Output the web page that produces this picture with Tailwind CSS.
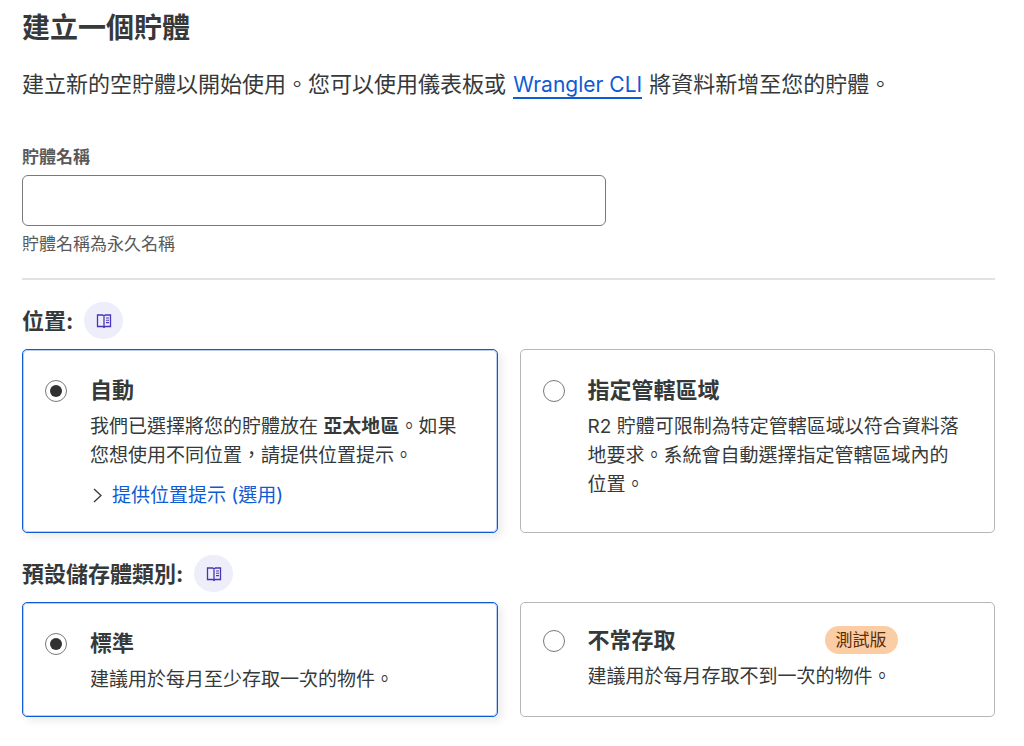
<!DOCTYPE html>
<html lang="zh-Hant-TW">
<head>
    <meta charset="UTF-8">
    <meta name="viewport" content="width=device-width, initial-scale=1.0">
    <title>建立一個貯體</title>
    <script src="https://cdn.jsdelivr.net/npm/@tailwindcss/browser@4"></script>
</head>
<body class="bg-white text-[#36393a] font-['Inter','Noto_Sans_CJK_TC',sans-serif]">
    <main class="pt-[10px] pb-7 pl-[22px] pr-[29px]">
        <h1 class="text-[28px] leading-9 font-bold">建立一個貯體</h1>
        <p class="mt-[22px] text-[22px] leading-[33px]">建立新的空貯體以開始使用。您可以使用儀表板或 <a href="#" class="mx-px text-[21px] text-[#0f5bd3] border-b-2 border-[#0f5bd3]">Wrangler CLI</a> 將資料新增至您的貯體。</p>

        <form>
            <!-- Bucket name -->
            <div class="mt-11 text-[#595959]">
                <label for="bucket-name" class="block text-[17px] leading-6 font-semibold">貯體名稱</label>
                <input id="bucket-name" type="text" aria-describedby="bucket-help" class="block mt-[6px] w-3/5 h-[51px] px-4 text-[19px] rounded-md border border-[#797979] bg-white">
                <p id="bucket-help" class="mt-[6px] text-[17px] leading-6">貯體名稱為永久名稱</p>
            </div>

            <hr class="mt-[22px] border-t-2 border-[#e2e2e2]">

            <!-- Location -->
            <section class="mt-[22px]">
                <div class="flex items-center gap-[11px]">
                    <h2 class="text-[22px] leading-9 font-bold">位置:</h2>
                    <a href="#" aria-label="位置文件" class="flex items-center justify-center w-[39px] h-[37px] rounded-full bg-[#eeeefb] text-[#4a33b8]">
                        <svg class="w-4 h-4" viewBox="0 0 16 16" fill="none" stroke="currentColor" stroke-width="1.3">
                            <path d="M1.5 2h5.2L8 3l1.3-1h5.2v11.5H9.3L8 14.5l-1.3-1H1.5zM8 3v11.5"/>
                            <path d="M10 5h3M10 7.3h3M10 9.6h3" stroke-width="1.1"/>
                        </svg>
                    </a>
                </div>
                <div class="mt-[10px] grid grid-cols-2 gap-[22px]">
                    <div class="flex items-start gap-[23px] rounded-[5px] border border-[#0f5bd3] bg-white py-[22px] pl-[22px] pr-8 shadow-[4px_4px_8px_rgba(0,0,0,0.08)] outline outline-[#0f5bd3]/30 -outline-offset-2">
                        <input id="loc-auto" type="radio" name="location" checked class="appearance-none shrink-0 mt-2 size-[22px] rounded-full border border-[#797979] p-1 bg-clip-content checked:bg-[#313131]">
                        <div class="min-w-0">
                            <label for="loc-auto" class="block text-[22px] leading-9 font-bold">自動</label>
                            <p class="mt-1 text-[19px] leading-[29px]">我們已選擇將您的貯體放在 <strong>亞太地區</strong>。如果您想使用不同位置，請提供位置提示。</p>
                            <button type="button" class="mt-[11px] flex items-center gap-[7px] text-[19px] leading-[29px] text-[#0f5bd3]">
                                <svg class="w-[15px] h-[15px] text-[#36393a]" viewBox="0 0 15 15" fill="none" stroke="currentColor" stroke-width="1.3"><path d="M4 1l7 6.5L4 14"/></svg>
                                提供位置提示 (選用)
                            </button>
                        </div>
                    </div>
                    <div class="flex items-start gap-[23px] rounded-[5px] border border-[#b6b6b6] bg-white py-[22px] pl-[22px] pr-8">
                        <input id="loc-jurisdiction" type="radio" name="location" class="appearance-none shrink-0 mt-2 size-[22px] rounded-full border border-[#797979] p-1 bg-clip-content checked:bg-[#313131]">
                        <div class="min-w-0">
                            <label for="loc-jurisdiction" class="block text-[22px] leading-9 font-bold">指定管轄區域</label>
                            <p class="mt-1 text-[19px] leading-[29px]">R2 貯體可限制為特定管轄區域以符合資料落地要求。系統會自動選擇指定管轄區域內的位置。</p>
                        </div>
                    </div>
                </div>
            </section>

            <!-- Default storage class -->
            <section class="mt-[22px]">
                <div class="flex items-center gap-[11px]">
                    <h2 class="text-[22px] leading-9 font-bold">預設儲存體類別:</h2>
                    <a href="#" aria-label="儲存體類別文件" class="flex items-center justify-center w-[39px] h-[37px] rounded-full bg-[#eeeefb] text-[#4a33b8]">
                        <svg class="w-4 h-4" viewBox="0 0 16 16" fill="none" stroke="currentColor" stroke-width="1.3">
                            <path d="M1.5 2h5.2L8 3l1.3-1h5.2v11.5H9.3L8 14.5l-1.3-1H1.5zM8 3v11.5"/>
                            <path d="M10 5h3M10 7.3h3M10 9.6h3" stroke-width="1.1"/>
                        </svg>
                    </a>
                </div>
                <div class="mt-[10px] grid grid-cols-2 gap-[22px]">
                    <div class="flex items-start gap-[23px] rounded-[5px] border border-[#0f5bd3] bg-white py-[22px] pl-[22px] pr-8 shadow-[4px_4px_8px_rgba(0,0,0,0.08)] outline outline-[#0f5bd3]/30 -outline-offset-2">
                        <input id="class-standard" type="radio" name="storage" checked class="appearance-none shrink-0 mt-2 size-[22px] rounded-full border border-[#797979] p-1 bg-clip-content checked:bg-[#313131]">
                        <div class="min-w-0">
                            <label for="class-standard" class="block text-[22px] leading-9 font-bold">標準</label>
                            <p class="mt-1 text-[19px] leading-[29px]">建議用於每月至少存取一次的物件。</p>
                        </div>
                    </div>
                    <div class="flex items-start gap-[23px] rounded-[5px] border border-[#b6b6b6] bg-white pt-[19px] pb-[22px] pl-[22px] pr-8">
                        <input id="class-infrequent" type="radio" name="storage" class="appearance-none shrink-0 mt-2 size-[22px] rounded-full border border-[#797979] p-1 bg-clip-content checked:bg-[#313131]">
                        <div class="min-w-0">
                            <div class="flex items-center gap-[149px]">
                                <label for="class-infrequent" class="text-[22px] leading-9 font-bold">不常存取</label>
                                <span class="rounded-full bg-[#fbcda5] px-[11px] text-[17px] leading-7 text-[#5c2c05]">測試版</span>
                            </div>
                            <p class="mt-1 text-[19px] leading-[29px]">建議用於每月存取不到一次的物件。</p>
                        </div>
                    </div>
                </div>
            </section>
        </form>
    </main>
</body>
</html>
